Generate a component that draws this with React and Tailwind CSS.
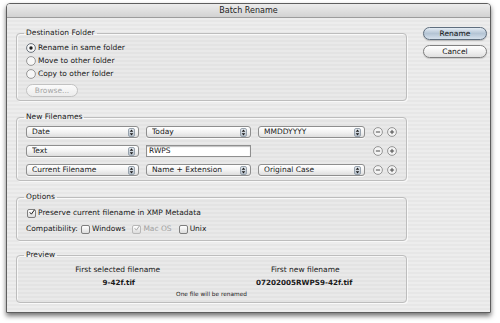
import React from "react";

function Radio({ checked, label }) {
  return (
    <div className="flex items-center h-[13px] gap-[2px]">
      <svg width="10" height="10" viewBox="0 0 10 10">
        <circle cx="5" cy="5" r="4.4" fill="#f7f7f7" stroke={checked ? "#5d6670" : "#8c8c8c"} strokeWidth="0.9" />
        {checked && <circle cx="5" cy="5" r="1.7" fill="#1e1e1e" />}
      </svg>
      <span>{label}</span>
    </div>
  );
}

function Checkbox({ checked, disabled, label }) {
  return (
    <div className="flex items-center gap-[2px]">
      <span
        className={`w-[9px] h-[9px] rounded-[2px] border bg-linear-to-b from-white to-[#dcdcdc] flex items-center justify-center ${
          disabled ? "border-[#b8b8b8]" : "border-[#7e7e7e]"
        }`}
      >
        {checked && (
          <svg width="9" height="9" viewBox="0 0 9 9" className="-mt-[2px] ml-[1px]">
            <path
              d="M1.5 4.6 L3.6 7 L8 0.8"
              fill="none"
              stroke={disabled ? "#a8a8a8" : "#1c1c1c"}
              strokeWidth="1.5"
              strokeLinecap="round"
              strokeLinejoin="round"
            />
          </svg>
        )}
      </span>
      <span className={disabled ? "text-[#a2a2a2]" : ""}>{label}</span>
    </div>
  );
}

function Select({ value, width }) {
  return (
    <div
      className={`${width} h-[12px] rounded-[3px] border border-[#8e8e8e] bg-linear-to-b from-white via-[#f3f3f3] to-[#dedede] flex items-center pl-[5px] pr-[3px] shadow-[0_1px_0_rgba(255,255,255,0.8)]`}
    >
      <span className="flex-1 truncate leading-[10px]">{value}</span>
      <span className="w-[7px] h-[9px] rounded-[2px] bg-linear-to-b from-[#e6ebf0] to-[#b7c1cc] border border-[#97a2ad] flex items-center justify-center">
        <svg width="5" height="7" viewBox="0 0 5 7">
          <path d="M2.5 0.6 L4.3 2.8 H0.7Z M2.5 6.4 L4.3 4.2 H0.7Z" fill="#1e1e1e" />
        </svg>
      </span>
    </div>
  );
}

function RoundButton({ plus }) {
  return (
    <svg width="10" height="10" viewBox="0 0 10 10">
      <circle cx="5" cy="5" r="4.4" fill="#f4f4f4" stroke="#8a8a8a" strokeWidth="0.9" />
      <path d="M2.9 5 H7.1" stroke="#3a3a3a" strokeWidth="0.9" />
      {plus && <path d="M5 2.9 V7.1" stroke="#3a3a3a" strokeWidth="0.9" />}
    </svg>
  );
}

function Group({ title, className, children }) {
  return (
    <fieldset
      className={`border border-[#bdbdbd] rounded-[4px] px-[9px] bg-black/[0.015] shadow-[inset_1px_1px_0_rgba(255,255,255,0.7),1px_1px_0_rgba(255,255,255,0.7)] ${className}`}
    >
      <legend className="-ml-[2px] px-[2px] leading-[10px] text-[#1a1a1a]">{title}</legend>
      {children}
    </fieldset>
  );
}

export default function App() {
  return (
    <div className="w-[500px] h-[323px] bg-white overflow-hidden pt-[3px] pl-[6px] font-['DejaVu_Sans','Liberation_Sans',sans-serif] text-[7.5px] text-[#1a1a1a]">
      <div className="w-[485px] h-[310px] border border-[#5e5e5e] rounded-t-[4px] flex flex-col bg-[repeating-linear-gradient(0deg,#ededed_0px,#ededed_2px,#e7e7e7_2px,#e7e7e7_4px)] shadow-[0_3px_5px_rgba(0,0,0,0.55)]">
        <div className="h-[14px] shrink-0 border-b border-[#9c9c9c] bg-linear-to-b from-[#ececec] to-[#d2d2d2] rounded-t-[3px] flex items-center justify-center text-[8px] text-[#222]">
          Batch Rename
        </div>

        <div className="flex flex-1 pt-[9px] pl-[9px]">
          <div className="w-[391px] pt-[1px] flex flex-col">
            <Group title="Destination Folder" className="h-[73px] pt-[3px]">
              <Radio checked label="Rename in same folder" />
              <Radio label="Move to other folder" />
              <Radio label="Copy to other folder" />
              <div className="mt-[4px] w-[52px] h-[13px] rounded-full border border-[#c2c2c2] bg-linear-to-b from-[#fbfbfb] to-[#ececec] flex items-center justify-center text-[#a5a5a5]">
                Browse...
              </div>
            </Group>

            <Group title="New Filenames" className="mt-[11px] h-[69px] pt-[4px]">
              <div className="flex flex-col gap-[7px]">
                <div className="flex items-center h-[12px]">
                  <Select value="Date" width="w-[113px]" />
                  <div className="ml-[7px]">
                    <Select value="Today" width="w-[105px]" />
                  </div>
                  <div className="ml-[7px]">
                    <Select value="MMDDYYYY" width="w-[107px]" />
                  </div>
                  <div className="ml-[8px] flex gap-[4px]">
                    <RoundButton />
                    <RoundButton plus />
                  </div>
                </div>
                <div className="flex items-center h-[12px]">
                  <Select value="Text" width="w-[113px]" />
                  <div className="ml-[7px] w-[105px] h-[12px] bg-white border border-[#8f8f8f] shadow-[inset_0_1px_1px_rgba(0,0,0,0.25)] pl-[2px] flex items-center">
                    RWPS
                  </div>
                  <div className="ml-[7px] w-[107px]" />
                  <div className="ml-[8px] flex gap-[4px]">
                    <RoundButton />
                    <RoundButton plus />
                  </div>
                </div>
                <div className="flex items-center h-[12px]">
                  <Select value="Current Filename" width="w-[113px]" />
                  <div className="ml-[7px]">
                    <Select value="Name + Extension" width="w-[105px]" />
                  </div>
                  <div className="ml-[7px]">
                    <Select value="Original Case" width="w-[107px]" />
                  </div>
                  <div className="ml-[8px] flex gap-[4px]">
                    <RoundButton />
                    <RoundButton plus />
                  </div>
                </div>
              </div>
            </Group>

            <Group title="Options" className="mt-[11px] h-[49px] pt-[5px]">
              <div className="h-[12px] flex items-center pl-[1px]">
                <Checkbox checked label="Preserve current filename in XMP Metadata" />
              </div>
              <div className="mt-[4px] h-[12px] flex items-center gap-[3px]">
                <span>Compatibility:</span>
                <Checkbox label="Windows" />
                <span className="ml-[4px]">
                  <Checkbox checked disabled label="Mac OS" />
                </span>
                <span className="ml-[4px]">
                  <Checkbox label="Unix" />
                </span>
              </div>
            </Group>

            <Group title="Preview" className="mt-[9px] h-[53px] pt-[5px]">
              <div className="grid grid-cols-2 text-center">
                <div className="leading-[10px] pr-[2px]">First selected filename</div>
                <div className="leading-[10px] pl-[2px]">First new filename</div>
                <div className="mt-[3px] leading-[10px] font-bold text-[7.2px]">9-42f.tif</div>
                <div className="mt-[3px] leading-[10px] font-bold text-[7.2px]">07202005RWPS9-42f.tif</div>
              </div>
              <div className="mt-[2px] text-center text-[5.8px] leading-[8px]">One file will be renamed</div>
            </Group>
          </div>

          <div className="ml-[16px] w-[64px] flex flex-col gap-[5px]">
            <div className="h-[13px] rounded-full border border-[#5f6e7e] bg-linear-to-b from-[#e4ecf4] via-[#b4c4d4] to-[#d6e1ec] flex items-center justify-center text-[#111] shadow-[0_1px_1px_rgba(0,0,0,0.2)]">
              Rename
            </div>
            <div className="h-[13px] rounded-full border border-[#7f7f7f] bg-linear-to-b from-white via-[#f1f1f1] to-[#e0e0e0] flex items-center justify-center text-[#111] shadow-[0_1px_1px_rgba(0,0,0,0.15)]">
              Cancel
            </div>
          </div>
        </div>
      </div>
    </div>
  );
}
